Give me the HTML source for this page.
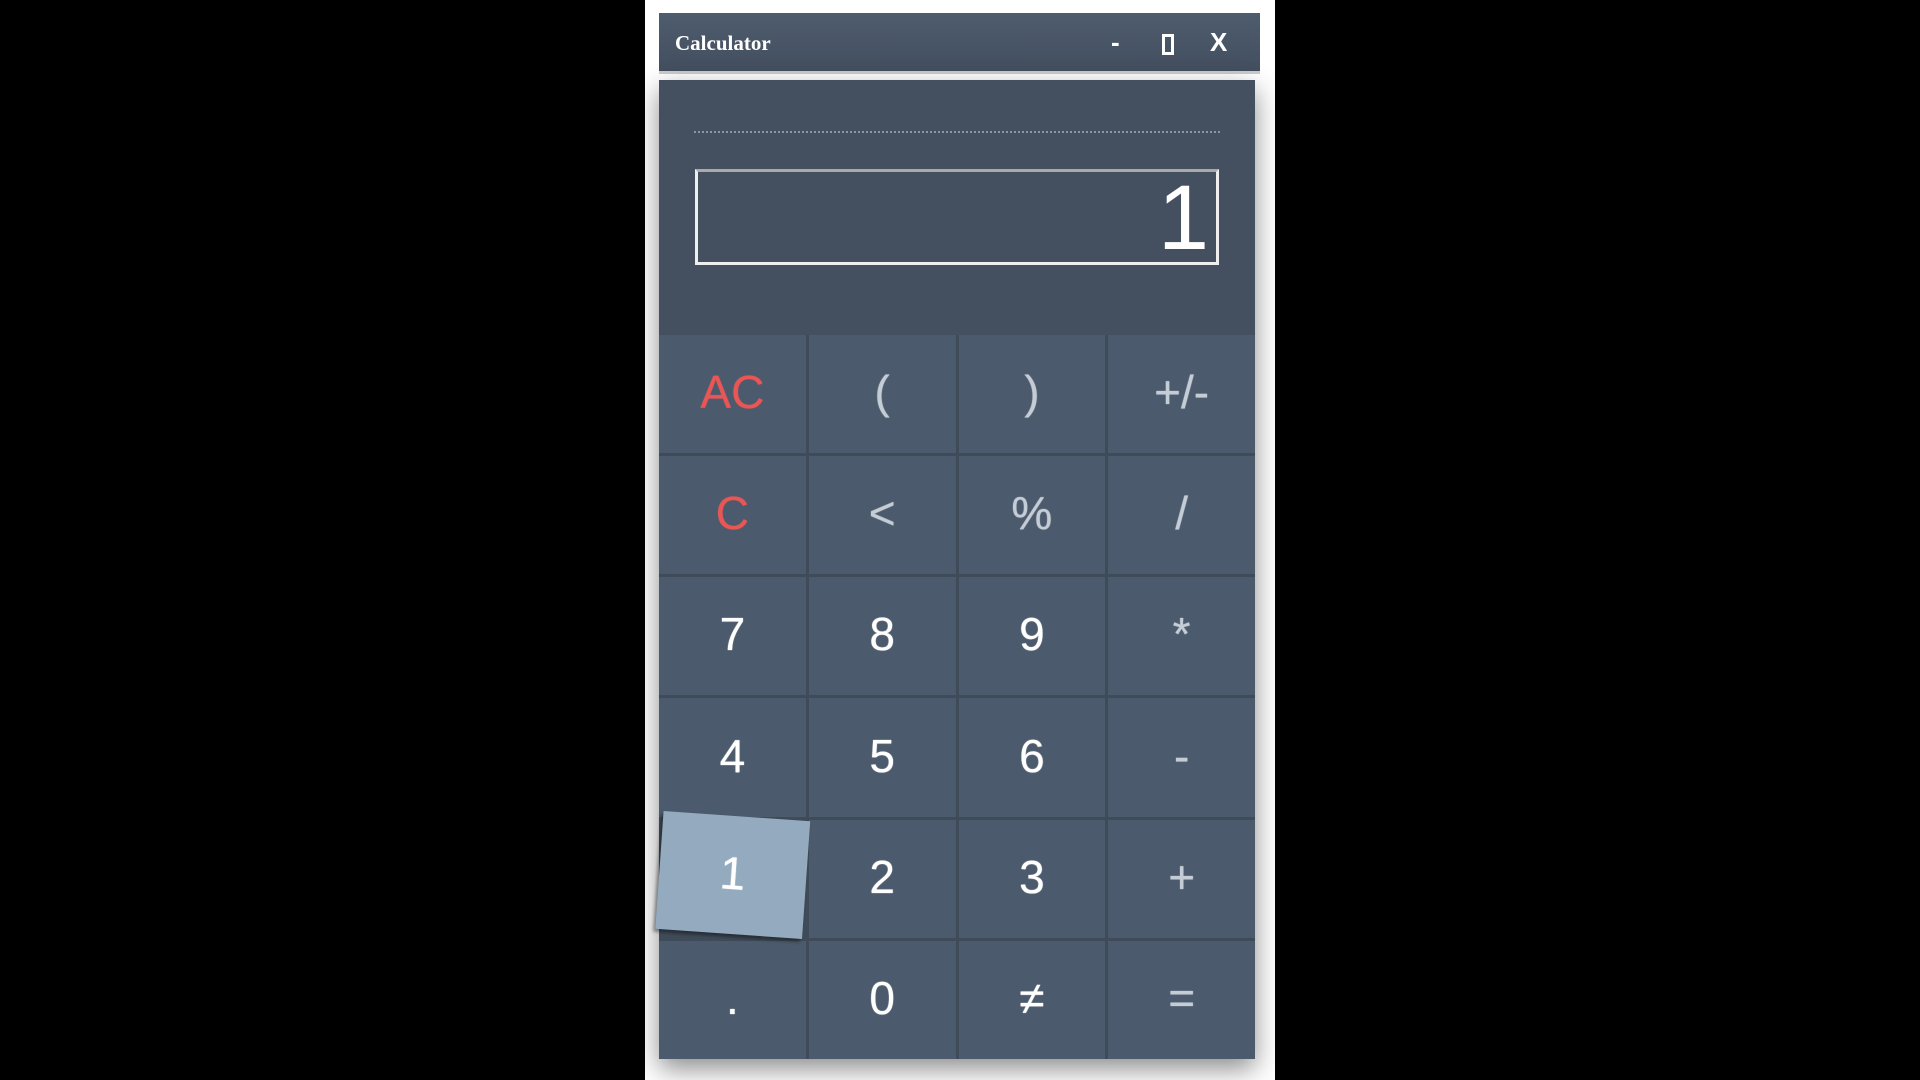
<!DOCTYPE html>
<html><head><style>
body{margin:0;width:1920px;height:1080px;background:#000;position:relative;overflow:hidden;font-family:"Liberation Sans",sans-serif}
#panel{position:absolute;left:645px;top:0;width:630px;height:1080px;background:#fff}
#title{position:absolute;left:659px;top:13px;width:601px;height:61px;background:linear-gradient(#4e5c6e,#434f5f);border-bottom:3px solid #ccc;box-sizing:border-box;color:#fff}
#title .t{position:absolute;left:16px;top:18px;font-family:"Liberation Serif",serif;font-size:21px;font-weight:bold}
#title .b{position:absolute;top:14px;font-size:26px;font-weight:bold}
#body{position:absolute;left:659px;top:80px;width:596px;height:979px;background:#44505f;box-shadow:0 10px 25px rgba(0,0,0,.45)}
#dots{position:absolute;left:35px;top:51px;width:526px;border-top:2px dotted #8a96a3}
#disp{position:absolute;left:36px;top:89px;width:524px;height:96px;box-sizing:border-box;border:3px solid #eee;border-top-color:#aaa;color:#fff;font-size:92px;text-align:right;line-height:92px;padding-right:7px}
#keys{position:absolute;left:0;top:255px;width:596px;height:724px;background:#3f4b59;display:grid;grid-template-columns:repeat(4,1fr);grid-template-rows:repeat(6,1fr);gap:3px}
.k{background:#4b5a6c;display:flex;align-items:center;justify-content:center;color:#fff;font-size:46px;padding-bottom:4px;box-sizing:border-box;text-shadow:0 0 1px currentColor}
.r{color:#e85656}.o{color:#c4ccd5}
.p{background:#94abbf;transform:rotate(4deg) translate(0,-4px);box-shadow:-2px 3px 3px rgba(0,0,0,.4)}
</style></head><body>
<div id="panel"></div>
<div id="title"><span class="t">Calculator</span><span class="b" style="left:452px">-</span><span style="position:absolute;left:503px;top:21px;width:12px;height:21px;border:3px solid #fff;box-sizing:border-box"></span><span class="b" style="left:551px">X</span></div>
<div id="body">
<div id="dots"></div>
<div id="disp">1</div>
<div id="keys">
<div class="k r">AC</div><div class="k o">(</div><div class="k o">)</div><div class="k o">+/-</div>
<div class="k r">C</div><div class="k o">&lt;</div><div class="k o">%</div><div class="k o">/</div>
<div class="k">7</div><div class="k">8</div><div class="k">9</div><div class="k o">*</div>
<div class="k">4</div><div class="k">5</div><div class="k">6</div><div class="k o">-</div>
<div class="k p">1</div><div class="k">2</div><div class="k">3</div><div class="k o">+</div>
<div class="k">.</div><div class="k">0</div><div class="k">≠</div><div class="k o">=</div>
</div></div>
</body></html>
